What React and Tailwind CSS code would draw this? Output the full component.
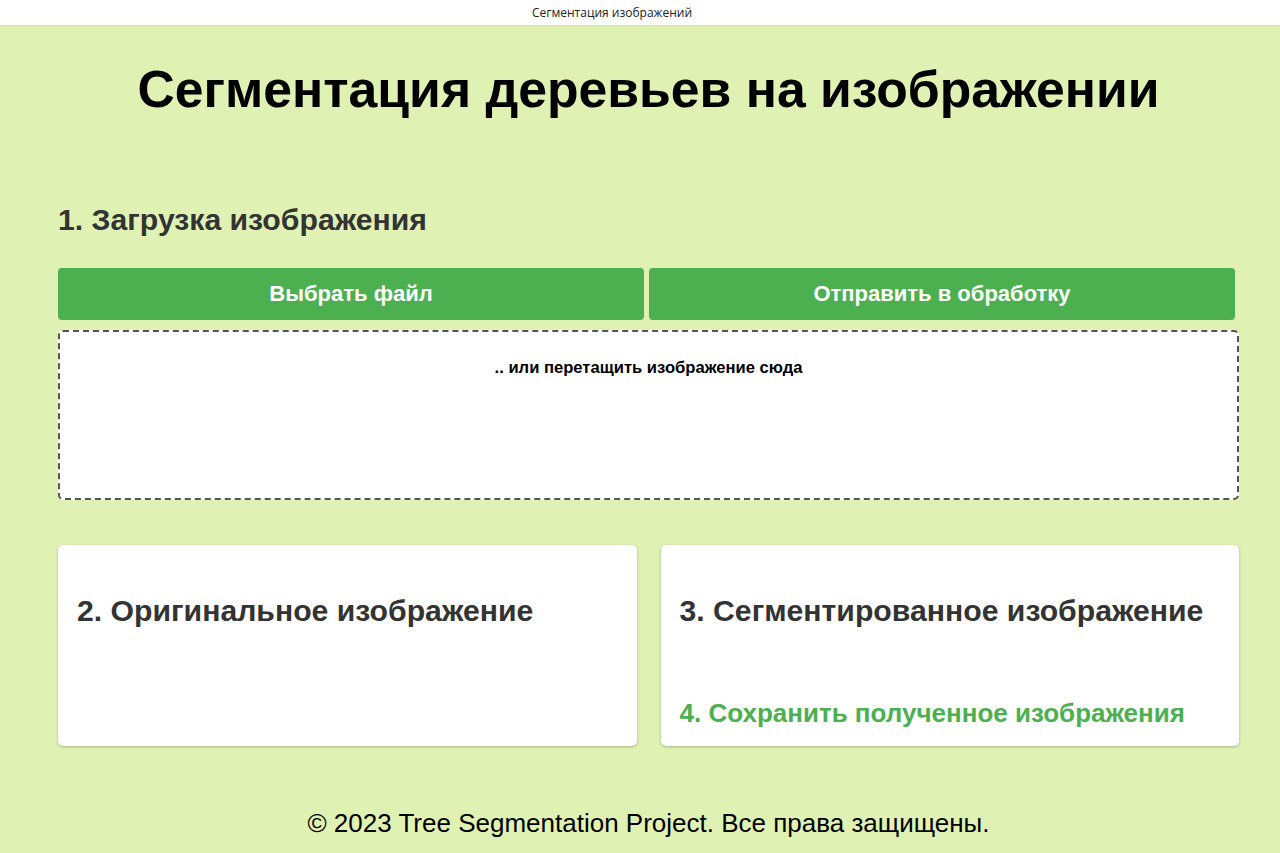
import React from "react";

export default function App() {
  return (
    <div className="min-h-[853px] bg-[#dff2b4] text-black" style={{ fontFamily: '"Liberation Sans", Arial, sans-serif' }}>
      <div className="h-[26px] bg-white border-b border-[#d8d8d8] flex items-center pl-[532px] text-[12px] text-[#222]" style={{ fontFamily: '"Open Sans", "Noto Sans", sans-serif' }}>
        Сегментация изображений
      </div>

      <div className="ml-[58px] w-[1181px]">
        <h1 className="text-center font-bold text-[51.7px] leading-none pt-[38px]">Сегментация деревьев на изображении</h1>

        <h2 className="mt-[89px] text-[30.2px] font-bold text-[#333] leading-none">1. Загрузка изображения</h2>

        <div className="grid grid-cols-2 gap-[5px] w-[1177px] mt-[33px]">
          <button className="h-[52px] rounded bg-[#4caf50] text-white font-bold text-[22px]">Выбрать файл</button>
          <button className="h-[52px] rounded bg-[#4caf50] text-white font-bold text-[22px]">Отправить в обработку</button>
        </div>

        <div className="mt-[10px] h-[170px] bg-white border-2 border-dashed border-[#555] rounded-[5px] pt-[24px] text-center font-bold text-[16.6px]">
          .. или перетащить изображение сюда
        </div>

        <div className="grid grid-cols-2 gap-[24px] mt-[45px]">
          <div className="h-[201px] bg-white rounded-[5px] shadow-[0_1px_3px_rgba(0,0,0,0.25)] px-[19px] pt-[51px]">
            <h2 className="text-[30.2px] font-bold text-[#333] leading-none">2. Оригинальное изображение</h2>
          </div>
          <div className="h-[201px] bg-white rounded-[5px] shadow-[0_1px_3px_rgba(0,0,0,0.25)] px-[19px] pt-[51px] flex flex-col">
            <h2 className="text-[30.2px] font-bold text-[#333] leading-none">3. Сегментированное изображение</h2>
            <div className="mt-[74px] text-[26px] font-bold text-[#4caf50] leading-none">4. Сохранить полученное изображения</div>
          </div>
        </div>

        <footer className="text-center text-[26px] mt-[64px] leading-none">© 2023 Tree Segmentation Project. Все права защищены.</footer>
      </div>
    </div>
  );
}
